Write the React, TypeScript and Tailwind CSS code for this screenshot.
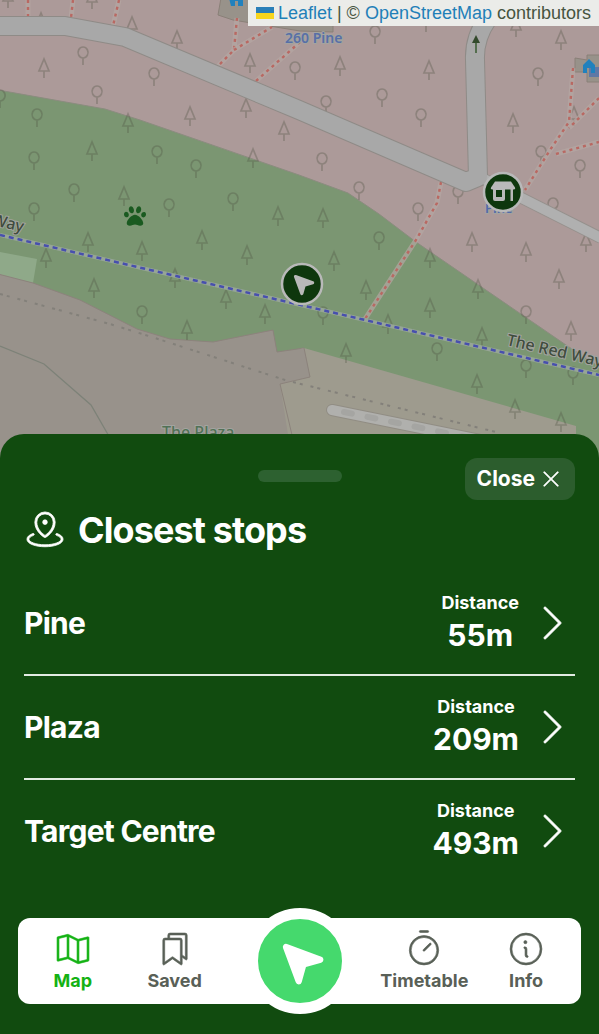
import React, { useState } from 'react';
import { FaPaw } from 'react-icons/fa';
import {
  PiBookmarksLight,
  PiCaretRightLight,
  PiInfoLight,
  PiMapPinAreaLight,
  PiMapTrifoldLight,
  PiNavigationArrowFill,
  PiTimerLight,
  PiXLight
} from 'react-icons/pi';

const STOPS = [
  { name: 'Pine', distance: 55 },
  { name: 'Plaza', distance: 209 },
  { name: 'Target Centre', distance: 493 }
];

// Head centres of the trees on the map
const CONIFERS = [
  [8, -4], [92, -3], [41, 20], [44, 66], [132, 24], [177, 38], [250, 61], [246, 106], [190, 114],
  [128, 121], [92, 149], [124, 194], [253, 156], [278, 214], [340, 64], [429, 68], [561, 38], [284, 129],
  [513, 121], [574, 114], [516, 25], [426, 20], [323, 216], [88, 240], [142, 249], [202, 238],
  [247, 253], [46, 256], [175, 276], [226, 297], [265, 312], [94, 286], [187, 328], [334, 259],
  [366, 288], [472, 240], [526, 250], [559, 277], [430, 256], [478, 287], [430, 306], [571, 329],
  [482, 335], [477, 382], [346, 351], [388, 322], [515, 407], [561, 420], [586, 240]
];

const BROADLEAVES = [
  [83, 52], [154, 73], [97, 91], [295, 67], [37, 114], [34, 157], [157, 151], [196, 165], [74, 189],
  [34, 208], [169, 204], [233, 198], [375, 31], [382, 94], [421, 114], [326, 101], [322, 158],
  [359, 187], [418, 208], [458, 191], [538, 73], [541, 151], [580, 165], [553, 203], [142, 311],
  [379, 237], [526, 311], [437, 348], [526, 365], [573, 372], [323, 312], [0, 95]
];

const FOOTPATHS = [
  'M28 0L28 17', 'M73 0L71 18', 'M119 0L113 26', 'M237 18L234 50L218 66', 'M234 50L272 27',
  'M256 81L300 42', 'M573 68L569 122L550 150L525 190', 'M599 98L569 128', 'M556 154L599 142',
  'M441 182L437 203L416 240L365 319'
];

export default function App() {
  const [tab, setTab] = useState('Map');

  return (
    <div className="min-h-screen flex flex-col bg-[#114b0f] font-['Inter',sans-serif]">
      {/* Map */}
      <section className="relative">
        <MapCanvas />
        <p className="absolute top-0 right-0 flex items-center h-[26px] px-2 bg-[#ebece9] text-[#46543f] text-lg leading-6 font-['Liberation_Sans',sans-serif] whitespace-pre">
          <a href="#" className="flex items-center gap-1 text-[#1f80b8]">
            <svg width="18" height="12" aria-hidden="true">
              <path fill="#2a7fb8" d="M0 0h18v6H0z" />
              <path fill="#f7d51d" d="M0 6h18v6H0z" />
            </svg>
            Leaflet
          </a>
          {' | © '}
          <a href="#" className="text-[#1f80b8]">OpenStreetMap</a>
          {' contributors'}
        </p>
      </section>

      {/* Bottom sheet */}
      <main className="relative flex-1 flex flex-col -mt-6 pt-6 pb-[30px] rounded-t-3xl bg-[#114b0f] text-white">
        <div className="px-6">
          <div className="grid grid-cols-[1fr_auto_1fr] items-start">
            <span className="col-start-2 mt-3 w-[84px] h-3 rounded-full bg-[#2d6130]" />
            <button className="justify-self-end flex items-center gap-1 h-[42px] px-3 rounded-xl bg-[#2c5d2d] text-[21px] font-bold">
              Close
              <PiXLight size={24} stroke="currentColor" strokeWidth={8} />
            </button>
          </div>

          <h1 className="flex items-center gap-3 mt-2 h-11 text-4xl font-bold tracking-tight">
            <PiMapPinAreaLight size={42} stroke="currentColor" strokeWidth={5} />
            Closest stops
          </h1>

          <ul className="mt-5 divide-y-2 divide-[#e3ebe3]">
            {STOPS.map(stop => (
              <li key={stop.name}>
                <a href="#" className="flex items-center h-[102px]">
                  <span className="flex-1 text-3xl font-bold tracking-tight">{stop.name}</span>
                  <span className="flex flex-col items-center pb-1">
                    <span className="text-lg leading-7 font-bold">Distance</span>
                    <span className="text-3xl font-bold">{stop.distance}m</span>
                  </span>
                  <PiCaretRightLight size={48} stroke="currentColor" strokeWidth={4} className="ml-2" />
                </a>
              </li>
            ))}
          </ul>
        </div>

        <nav className="grid grid-cols-[1fr_1fr_148px_1fr_1fr] items-center mt-9 mx-[18px] px-1 py-[11px] rounded-xl bg-white">
          <NavButton label="Map" active={tab === 'Map'} onClick={() => setTab('Map')}>
            <PiMapTrifoldLight size={40} stroke="currentColor" strokeWidth={4} />
          </NavButton>
          <NavButton label="Saved" active={tab === 'Saved'} onClick={() => setTab('Saved')}>
            <PiBookmarksLight size={40} stroke="currentColor" strokeWidth={4} />
          </NavButton>
          <button
            aria-label="Closest stops"
            className="justify-self-center flex items-center justify-center -my-6 size-[106px] rounded-full border-11 border-white bg-[#45d96d]"
          >
            <PiNavigationArrowFill size={50} />
          </button>
          <NavButton label="Timetable" active={tab === 'Timetable'} onClick={() => setTab('Timetable')}>
            <PiTimerLight size={40} stroke="currentColor" strokeWidth={4} />
          </NavButton>
          <NavButton label="Info" active={tab === 'Info'} onClick={() => setTab('Info')}>
            <PiInfoLight size={40} stroke="currentColor" strokeWidth={4} />
          </NavButton>
        </nav>
      </main>
    </div>
  );
}

const NavButton: React.FC<{ label: string, active: boolean, onClick: () => void, children: React.ReactNode }> = ({ label, active, onClick, children }) => (
  <button
    onClick={onClick}
    className={`flex flex-col items-center text-lg leading-6 font-bold ${active ? 'text-[#14b214]' : 'text-[#596057]'}`}
  >
    {children}
    {label}
  </button>
);

const MapCanvas = () => (
  <svg viewBox="0 0 599 458" preserveAspectRatio="xMidYMid slice" className="block w-full h-[458px]" role="img" aria-label="Map">
    <path fill="#ac9a99" d="M0 0H599V458H0z" />
    {/* park */}
    <path
      fill="#7b9672"
      stroke="#8b8c7f"
      d="M-2 90L105 109L140 120L299 175L348 193L379 214L416 242L566 345L601 368V460H-2z"
    />
    <path fill="#8fa989" d="M0 252L37 259L33 283L0 276z" />
    {/* plaza */}
    <path
      fill="#98928b"
      stroke="#8c837c"
      d="M-2 274L33 283L80 300L137 329L170 339L213 342L273 330L277 352L304 348L400 460H-2z"
    />
    <path fill="#9e9b8e" d="M304 348L576 426V460H292L280 384L310 377z" />
    <path fill="#98928b" d="M300 349L304 348L310 377L300 379z" />
    <path fill="none" stroke="#8c837c" d="M292 435L280 384L310 377L304 348" />
    <path fill="none" stroke="#7d8278" strokeWidth="1.3" d="M0 346L44 364L91 405L110 438" />
    <path fill="none" stroke="#83807a" strokeWidth="2" strokeDasharray="3 4 3 8" d="M0 294L110 324L155 338L285 380L305 385L500 433" />
    <path fill="none" stroke="#918d84" strokeWidth="12" strokeLinecap="round" d="M332 410L480 440" />
    <path fill="none" stroke="#b0b0ad" strokeWidth="10" strokeLinecap="round" d="M332 410L480 440" />
    <path fill="none" stroke="#a5a5a2" strokeWidth="6" strokeLinecap="round" strokeDasharray="8 16" d="M344 412L480 440" />

    <g fill="none" stroke="#4e5040" strokeOpacity="0.32" strokeWidth="1.7">
      {CONIFERS.map(([x, y]) => (
        <path key={`${x}-${y}`} d={`M${x} ${y - 7}l-5 12h10zM${x} ${y + 5}v7`} />
      ))}
      {BROADLEAVES.map(([x, y]) => (
        <path key={`${x}-${y}`} d={`M${x} ${y + 6}a5 5.5 0 1 1 .1 0zv7`} />
      ))}
    </g>

    {/* buildings */}
    <path fill="#98928a" stroke="#8a8078" d="M221 -2L218 15L233 20L300 31L333 32V-2z" />
    <path fill="#98928a" stroke="#8a8078" d="M575 58L587 60V55H601V82H587V72H575z" />

    {/* footpaths */}
    {FOOTPATHS.map(d => (
      <g key={d} fill="none">
        <path d={d} stroke="#b5a7a3" strokeWidth="5" strokeOpacity="0.7" />
        <path d={d} stroke="#b96862" strokeWidth="2.4" strokeDasharray="3 4" />
      </g>
    ))}

    {/* roads */}
    <g fill="none" strokeLinejoin="round">
      <path stroke="#96918d" strokeWidth="12" d="M478 176L601 238" />
      <path stroke="#8f8b87" strokeWidth="20" d="M-2 26H65L125 37L299 110L466 182L478 177L475 60Q474 38 488 18" />
      <path stroke="#b0b0b0" strokeWidth="10" d="M478 176L601 238" />
      <path stroke="#a8a8a8" strokeWidth="18" d="M-2 26H65L125 37L299 110L466 182L478 177L475 60Q474 38 488 18" />
    </g>
    <path fill="none" stroke="#395b30" strokeWidth="1.5" d="M476 53V40" />
    <path fill="#334a2c" d="M476 35L480 43H472z" />

    <path fill="none" stroke="#96a596" strokeWidth="4" d="M0 235L365 320L599 375" />
    <path fill="none" stroke="#474fae" strokeWidth="2.5" strokeDasharray="5 4" d="M0 235L365 320L599 375" />

    {/* houses */}
    <path fill="#2181bd" d="M229 -2H243V6H238V1H235V6H231z" />
    <path fill="#6078a5" d="M589 67H599V77H589z" />
    <path fill="#2181bd" d="M583 65L589 59L595 65V73H591V68H587V73H583z" />
    <FaPaw x="124" y="205" size={22} color="#1a5a20" />

    <g className="font-['Noto_Sans',sans-serif]" stroke="#a3a4a0" strokeWidth="2" paintOrder="stroke">
      <text x="285" y="43" fontSize="14" fontWeight="600" fill="#586fa7">260 Pine</text>
      <text x="485" y="213" fontSize="13" fontWeight="600" fill="#5269a9">Pine</text>
      <text x="162" y="438" fontSize="16" fontWeight="500" fill="#527156">The Plaza</text>
      <text transform="translate(506 345) rotate(13)" fontSize="16" fontWeight="500" fill="#3f4c3d">The Red Way</text>
      <text transform="translate(-73 210) rotate(13)" fontSize="16" fontWeight="500" fill="#3f4c3d">The Red Way</text>
    </g>

    {/* markers */}
    <circle cx="503" cy="192" r="19" fill="#0e370d" stroke="#b9b9b9" strokeWidth="2.5" />
    <g fill="#b9b9b9">
      <path d="M495 181.500h16l4 6q.5 2-1.500 2h-21q-2 0-1.500-2z" />
      <path fillRule="evenodd" d="M493 189h12v10q0 2-2 2h-8q-2 0-2-2zM496 190v7h6v-7z" />
      <path d="M510.500 189h2.500v12h-2.500z" />
    </g>
    <circle cx="302" cy="284" r="20" fill="#0e370d" stroke="#b9b9b9" strokeWidth="2.5" />
    <PiNavigationArrowFill x="290" y="271" size={25} color="#b9b9b9" />
  </svg>
);
